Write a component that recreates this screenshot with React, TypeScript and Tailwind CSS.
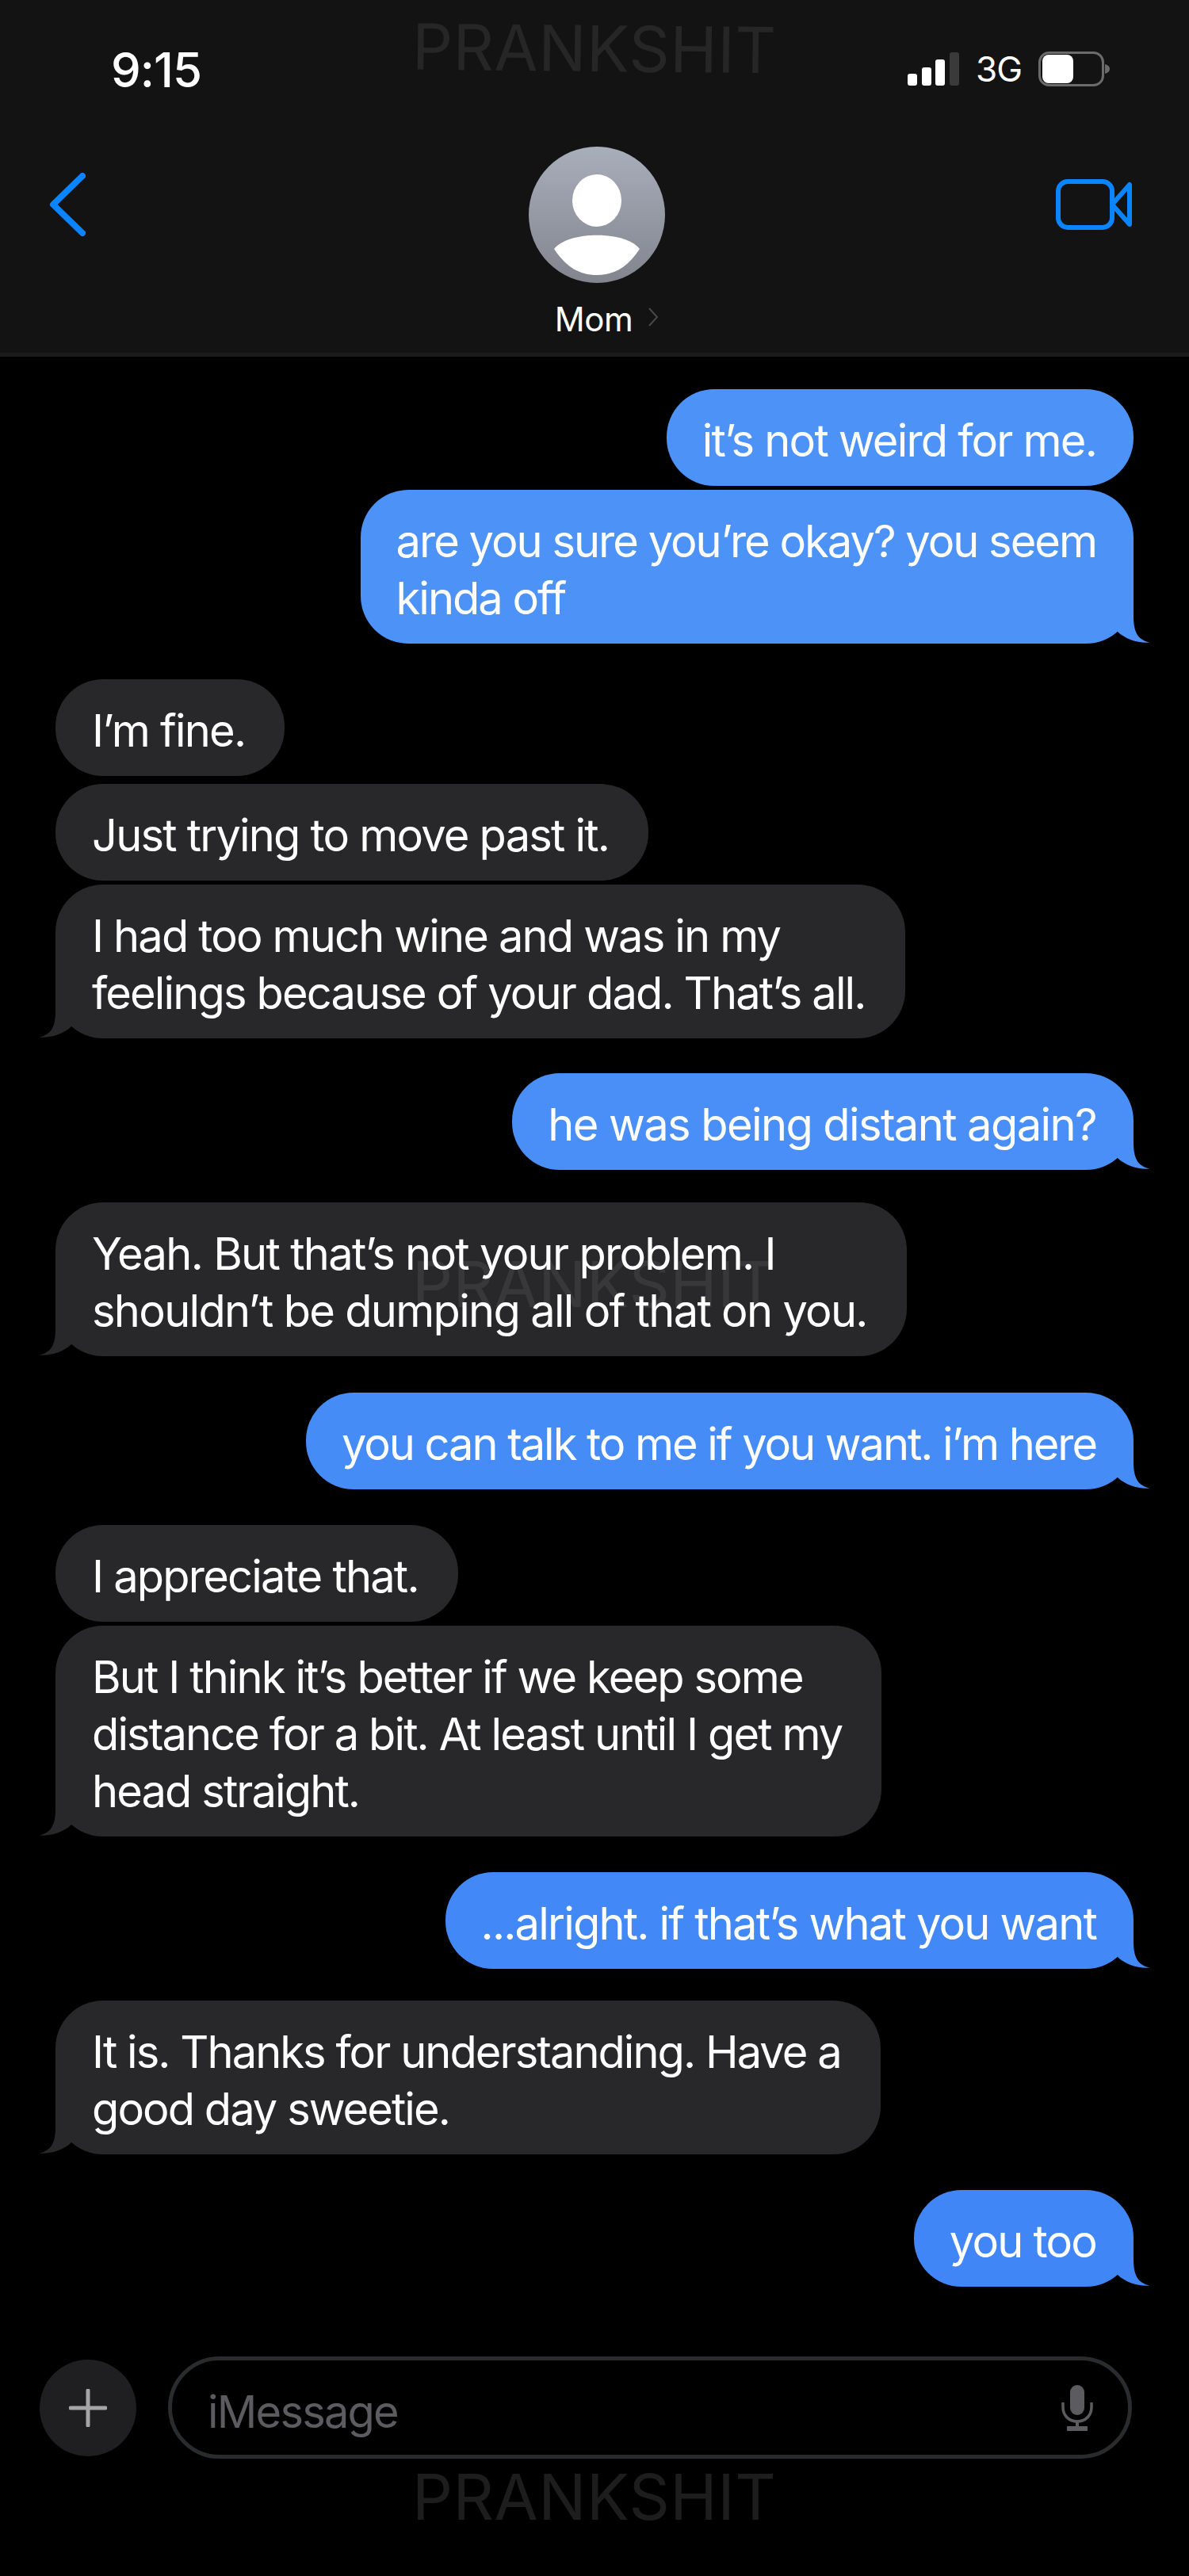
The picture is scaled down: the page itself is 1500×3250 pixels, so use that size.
import React from 'react';

type Msg = { lines: string[]; tail?: boolean; extraTop?: string; tr?: string };
type Cluster = { from: 'me' | 'mom'; gap: string; bg?: string; fill?: string; msgs: Msg[] };

const clusters: Cluster[] = [
  {
    from: 'me',
    gap: 'mt-0',
    bg: 'bg-[#4c92f7]',
    fill: 'fill-[#4c92f7]',
    msgs: [
      { lines: ['it’s not weird for me.'] },
      { lines: ['are you sure you’re okay? you seem', 'kinda off'], tail: true, tr: 'tracking-[-2px]' },
    ],
  },
  {
    from: 'mom',
    gap: 'mt-[45px]',
    msgs: [
      { lines: ['I’m fine.'] },
      { lines: ['Just trying to move past it.'], extraTop: 'mt-[5px]' },
      {
        lines: ['I had too much wine and was in my', 'feelings because of your dad. That’s all.'],
        tail: true,
        tr: 'tracking-[-1.85px]',
      },
    ],
  },
  {
    from: 'me',
    gap: 'mt-[44px]',
    bg: 'bg-[#498ff7]',
    fill: 'fill-[#498ff7]',
    msgs: [{ lines: ['he was being distant again?'], tail: true, tr: 'tracking-[-1.6px]' }],
  },
  {
    from: 'mom',
    gap: 'mt-[41px]',
    msgs: [
      {
        lines: ['Yeah. But that’s not your problem. I', 'shouldn’t be dumping all of that on you.'],
        tail: true,
        tr: 'tracking-[-1.7px]',
      },
    ],
  },
  {
    from: 'me',
    gap: 'mt-[46px]',
    bg: 'bg-[#468cf7]',
    fill: 'fill-[#468cf7]',
    msgs: [{ lines: ['you can talk to me if you want. i’m here'], tail: true, tr: 'tracking-[-2.05px]' }],
  },
  {
    from: 'mom',
    gap: 'mt-[45px]',
    msgs: [
      { lines: ['I appreciate that.'] },
      {
        lines: ['But I think it’s better if we keep some', 'distance for a bit. At least until I get my', 'head straight.'],
        tail: true,
        tr: 'tracking-[-1.9px]',
      },
    ],
  },
  {
    from: 'me',
    gap: 'mt-[45px]',
    bg: 'bg-[#4288f7]',
    fill: 'fill-[#4288f7]',
    msgs: [{ lines: ['...alright. if that’s what you want'], tail: true }],
  },
  {
    from: 'mom',
    gap: 'mt-[40px]',
    msgs: [{ lines: ['It is. Thanks for understanding. Have a', 'good day sweetie.'], tail: true, tr: 'tracking-[-1.95px]' }],
  },
  {
    from: 'me',
    gap: 'mt-[45px]',
    bg: 'bg-[#4086f7]',
    fill: 'fill-[#4086f7]',
    msgs: [{ lines: ['you too'], tail: true }],
  },
];

function Tail({ mom, fill }: { mom: boolean; fill?: string }) {
  return (
    <svg
      viewBox="0 0 50 60"
      className={
        mom
          ? 'absolute bottom-0 left-[-20px] w-[50px] h-[60px] -scale-x-100 fill-[#28282a]'
          : `absolute bottom-0 right-[-20px] w-[50px] h-[60px] ${fill}`
      }
    >
      <path d="M30 0 L30 25 C30 45 35 55 50 58.5 C38 60 20 55 10 45 L10 0 Z" />
    </svg>
  );
}

function Bubble({ msg, mom, bg, fill }: { msg: Msg; mom: boolean; bg?: string; fill?: string }) {
  return (
    <div
      className={
        mom
          ? `relative self-start rounded-[60px] bg-[#28282a] pl-[46px] pr-[50px] pt-[29px] pb-[21px] ${msg.extraTop ?? ''}`
          : `relative self-end rounded-[60px] ${bg} pl-[45px] pr-[47px] pt-[29px] pb-[21px]`
      }
    >
      {msg.tail && <Tail mom={mom} fill={fill} />}
      <div className={`relative text-white text-[56px] leading-[72px] whitespace-nowrap ${msg.tr ?? 'tracking-[-1.8px]'}`}>
        {msg.lines.map((l) => (
          <div key={l}>{l}</div>
        ))}
      </div>
    </div>
  );
}

function Watermark({ className }: { className: string }) {
  return (
    <div
      className={`absolute left-[520px] w-[460px] text-[80px] leading-[60px] tracking-[0.5px] pointer-events-none whitespace-nowrap ${className}`}
    >
      PRANKSHIT
    </div>
  );
}

function StatusBar() {
  return (
    <div className="flex items-center justify-between h-[110px] pt-[66px] pl-[140px] pr-[100px]">
      <span className="text-white text-[60px] leading-[60px] font-medium tracking-[-1px]">9:15</span>
      <div className="flex items-center mt-[-2px]">
        <svg viewBox="0 0 65 42" className="w-[65px] h-[42px]">
          <rect x="0" y="27" width="12" height="15" rx="3" fill="#fff" />
          <rect x="18" y="19" width="12" height="23" rx="3" fill="#fff" />
          <rect x="35" y="9" width="12" height="33" rx="3" fill="#fff" />
          <rect x="53" y="0" width="12" height="42" rx="3" fill="#3a3a3a" />
        </svg>
        <span className="ml-[21px] text-white text-[44px] leading-[44px] tracking-[-1px]">3G</span>
        <svg viewBox="0 0 90 44" className="ml-[21px] w-[90px] h-[44px]">
          <rect x="1.5" y="1.5" width="80" height="41" rx="12" fill="none" stroke="#6b6b6b" strokeWidth="3" />
          <rect x="5" y="4" width="39" height="36" rx="8" fill="#fff" />
          <path d="M84 16 C88 17 90 19 90 22 C90 25 88 27 84 28 Z" fill="#6b6b6b" />
        </svg>
      </div>
    </div>
  );
}

function Header() {
  return (
    <header className="relative h-[450px] bg-[#131313] border-b-[5px] border-[#1c1c1d]">
      <StatusBar />
      <div className="grid grid-cols-[1fr_auto_1fr] items-start pl-[62px] pr-[56px] pt-[75px]">
        <svg viewBox="0 0 46 80" className="mt-[33px] w-[46px] h-[80px]" fill="none" stroke="#0a84ff" strokeWidth="8" strokeLinecap="round" strokeLinejoin="round">
          <path d="M42 4 L5 40 L42 76" />
        </svg>
        <div className="flex flex-col items-center">
          <div className="w-[172px] h-[172px] rounded-full bg-gradient-to-b from-[#a9aebb] to-[#82858e] overflow-hidden">
            <svg viewBox="0 0 172 172" className="w-full h-full">
              <ellipse cx="86" cy="68" rx="31" ry="33" fill="#fff" />
              <path d="M32 129 C50 106 122 106 140 129 C125 152 108 162 86 162 C64 162 47 152 32 129 Z" fill="#fff" />
            </svg>
          </div>
          <div className="relative mt-[21px] text-white text-[42px] leading-[50px] tracking-[-0.5px] mr-[8px]">
            Mom
            <svg viewBox="0 0 16 26" className="absolute left-[116px] top-[9px] w-[16px] h-[26px]" fill="none" stroke="#48484a" strokeWidth="2">
              <path d="M3 2 L13 13 L3 24" />
            </svg>
          </div>
        </div>
        <svg viewBox="0 0 96 64" className="justify-self-end mr-[16px] mt-[41px] w-[96px] h-[64px]" fill="none" stroke="#0a84ff" strokeWidth="6" strokeLinejoin="round">
          <rect x="3" y="3" width="68" height="58" rx="12" />
          <path d="M71 32 L93 7 L93 57 Z" />
        </svg>
      </div>
    </header>
  );
}

function Composer() {
  return (
    <div className="flex items-center gap-[40px] mt-[88px] pl-[50px] pr-[72px]">
      <div className="flex items-center justify-center w-[122px] h-[122px] rounded-full bg-[#1f1f21] shrink-0">
        <svg viewBox="0 0 48 48" className="w-[48px] h-[48px]" stroke="#a5a5a7" strokeWidth="5" strokeLinecap="round">
          <path d="M24 2 L24 46 M2 24 L46 24" />
        </svg>
      </div>
      <div className="flex flex-1 items-center justify-between h-[129px] rounded-[65px] border-[5px] border-[#2a2b2d] pl-[45px] pr-[44px]">
        <span className="text-[#5c5c60] text-[56px] leading-[72px] tracking-[-1.8px] mt-[10px]">iMessage</span>
        <svg viewBox="0 0 40 58" className="w-[40px] h-[58px]" fill="#5c5c60">
          <rect x="11" y="0" width="18" height="38" rx="9" />
          <path d="M2 22 L2 28 C2 39 10 46 20 46 C30 46 38 39 38 28 L38 22" fill="none" stroke="#5c5c60" strokeWidth="3.5" />
          <rect x="18" y="45" width="4" height="8" />
          <rect x="7" y="52" width="26" height="6" />
        </svg>
      </div>
    </div>
  );
}

export default function App() {
  return (
    <div className="relative w-[1500px] h-[3250px] bg-black overflow-hidden font-['Inter',sans-serif]">
      <Header />
      <main className="flex flex-col pt-[41px] pl-[70px] pr-[70px]">
        {clusters.map((c, i) => (
          <div key={i} className={`flex flex-col gap-[5px] ${c.gap}`}>
            {c.msgs.map((m, j) => (
              <Bubble key={j} msg={m} mom={c.from === 'mom'} bg={c.bg} fill={c.fill} />
            ))}
          </div>
        ))}
      </main>
      <Composer />
      <Watermark className="top-[31px] text-[#262626] rotate-[0.6deg]" />
      <Watermark className="top-[1590px] text-white/[0.08]" />
      <Watermark className="top-[3120px] text-[#1d1d1d]" />
    </div>
  );
}
